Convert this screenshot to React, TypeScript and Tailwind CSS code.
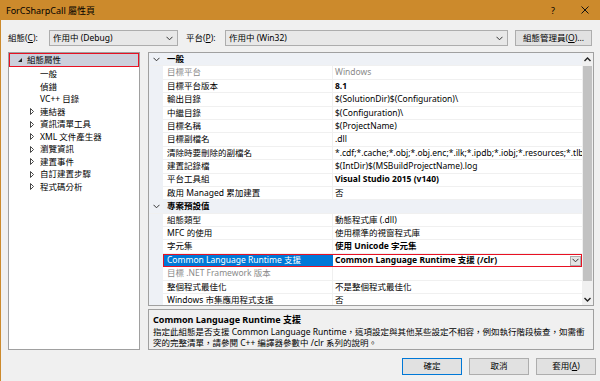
import React from "react";

type Row =
  | { cat: string }
  | { name: string; value?: string; bold?: boolean; gray?: boolean; grayName?: boolean; selected?: boolean };

const rows: Row[] = [
  { cat: "一般" },
  { name: "目標平台", value: "Windows", gray: true, grayName: true },
  { name: "目標平台版本", value: "8.1", bold: true },
  { name: "輸出目錄", value: "$(SolutionDir)$(Configuration)\\" },
  { name: "中繼目錄", value: "$(Configuration)\\" },
  { name: "目標名稱", value: "$(ProjectName)" },
  { name: "目標副檔名", value: ".dll" },
  {
    name: "清除時要刪除的副檔名",
    value:
      "*.cdf;*.cache;*.obj;*.obj.enc;*.ilk;*.ipdb;*.iobj;*.resources;*.tlb;*.tli;*.tlh;*.tmp;*.rsp;*.pgc;*.pgd;*.meta;*.tlog",
  },
  { name: "建置記錄檔", value: "$(IntDir)$(MSBuildProjectName).log" },
  { name: "平台工具組", value: "Visual Studio 2015 (v140)", bold: true },
  { name: "啟用 Managed 累加建置", value: "否" },
  { cat: "專案預設值" },
  { name: "組態類型", value: "動態程式庫 (.dll)" },
  { name: "MFC 的使用", value: "使用標準的視窗程式庫" },
  { name: "字元集", value: "使用 Unicode 字元集", bold: true },
  { name: "Common Language Runtime 支援", value: "Common Language Runtime 支援 (/clr)", bold: true, selected: true },
  { name: "目標 .NET Framework 版本", value: "", grayName: true },
  { name: "整個程式最佳化", value: "不是整個程式最佳化" },
  { name: "Windows 市集應用程式支援", value: "否" },
];

const treeItems = [
  { label: "一般", expand: false },
  { label: "偵錯", expand: false },
  { label: "VC++ 目錄", expand: false },
  { label: "連結器", expand: true },
  { label: "資訊清單工具", expand: true },
  { label: "XML 文件產生器", expand: true },
  { label: "瀏覽資訊", expand: true },
  { label: "建置事件", expand: true },
  { label: "自訂建置步驟", expand: true },
  { label: "程式碼分析", expand: true },
];

const Chevron = ({ className = "" }: { className?: string }) => (
  <svg width="7" height="5" viewBox="0 0 7 5" className={className}>
    <polyline points="0.5,0.8 3.5,3.8 6.5,0.8" fill="none" stroke="#333" strokeWidth="1" />
  </svg>
);

const Combo = ({ text, w }: { text: string; w: string }) => (
  <div className={`${w} h-[16px] border border-[#adadad] bg-[#e8e8e8] flex items-center justify-between pl-[3px] pr-[4px]`}>
    <span>{text}</span>
    <Chevron />
  </div>
);

const Btn = ({ children, primary }: { children: React.ReactNode; primary?: boolean }) => (
  <div
    className={`w-[60px] h-[17px] flex items-center justify-center bg-[#e1e1e1] border ${
      primary ? "border-[#0078d7]" : "border-[#adadad]"
    }`}
  >
    {children}
  </div>
);

export default function App() {
  return (
    <div className="w-[600px] h-[381px] overflow-hidden bg-[#f0f0f0] border-l border-[#cc8a2c] flex flex-col text-[8.5px] leading-none text-black font-['Noto_Sans','Noto_Sans_CJK_TC',sans-serif]">
      {/* Title bar */}
      <div className="h-[20px] bg-[#cc8a2c] flex items-center pl-[5px] shrink-0">
        <span className="text-[9px]">ForCSharpCall 屬性頁</span>
        <span className="ml-auto text-[9px]">?</span>
        <svg width="8" height="8" viewBox="0 0 8 8" className="ml-[26px] mr-[11px]">
          <path d="M0.5 0.5 L7.5 7.5 M7.5 0.5 L0.5 7.5" stroke="#111" strokeWidth="1" />
        </svg>
      </div>

      {/* Configuration row */}
      <div className="flex items-center pl-[7px] pt-[10px] shrink-0">
        <span className="w-[41px]">
          組態(<span className="underline">C</span>):
        </span>
        <Combo text="作用中 (Debug)" w="w-[129px]" />
        <span className="w-[39px] ml-[8px]">
          平台(<span className="underline">P</span>):
        </span>
        <Combo text="作用中 (Win32)" w="w-[283px]" />
        <div className="ml-[7px] w-[77px] h-[16px] border border-[#adadad] bg-[#e1e1e1] flex items-center justify-center">
          組態管理員(<span className="underline">O</span>)...
        </div>
      </div>

      {/* Main */}
      <div className="flex pl-[7px] mt-[6px] gap-[8px] shrink-0">
        {/* Tree */}
        <div className="w-[132px] h-[298px] border border-[#a0a0a0] bg-white">
          <div className="h-[14px] border border-[#e81123] bg-[#ccd0dc] flex items-center pl-[8px]">
            <svg width="4" height="4" viewBox="0 0 4 4">
              <polygon points="4,0 4,4 0,4" fill="#222" />
            </svg>
            <span className="ml-[5px]">組態屬性</span>
          </div>
          <div className="mt-[1px]">
            {treeItems.map((t) => (
              <div key={t.label} className="h-[12.5px] flex items-center pl-[21px]">
                <div className="w-[10px]">
                  {t.expand && (
                    <svg width="4" height="7" viewBox="0 0 4 7">
                      <polygon points="0.5,0.5 3.5,3.5 0.5,6.5" fill="none" stroke="#333" strokeWidth="0.9" />
                    </svg>
                  )}
                </div>
                <span>{t.label}</span>
              </div>
            ))}
          </div>
        </div>

        {/* Right column */}
        <div className="w-[446px] flex flex-col gap-[3px]">
          {/* Property grid */}
          <div className="h-[254px] border border-[#a0a0a0] bg-white flex overflow-hidden">
            <div className="flex-1 min-w-0 flex flex-col overflow-hidden">
              {rows.map((r, i) =>
                "cat" in r ? (
                  <div key={i} className="h-[13.4px] shrink-0 flex items-center bg-[#eef1f6] border-b border-[#f0f0f0]">
                    <div className="w-[14px] shrink-0 flex justify-center">
                      <Chevron />
                    </div>
                    <span className="pl-[4px] font-bold">{r.cat}</span>
                  </div>
                ) : (
                  <div key={i} className="h-[13.4px] shrink-0 flex">
                    <div className="w-[14px] shrink-0 bg-[#eef1f6]" />
                    {r.selected ? (
                      <div className="flex-1 min-w-0 flex border border-[#e81123] bg-white">
                        <div className="w-[169px] shrink-0 bg-[#0078d7] text-white flex items-center pl-[3px] whitespace-nowrap">
                          {r.name}
                        </div>
                        <div className="flex-1 min-w-0 flex items-center pl-[2px] font-bold whitespace-nowrap">
                          <span>{r.value}</span>
                          <div className="ml-auto w-[11px] h-[10px] border border-[#adadad] bg-[#e5e5e5] flex items-center justify-center">
                            <Chevron />
                          </div>
                        </div>
                      </div>
                    ) : (
                      <div className="flex-1 min-w-0 flex border-b border-[#f0f0f0]">
                        <div
                          className={`w-[170px] shrink-0 border-r border-[#f0f0f0] flex items-center pl-[4px] whitespace-nowrap ${
                            r.grayName ? "text-[#8a8a8a]" : ""
                          }`}
                        >
                          {r.name}
                        </div>
                        <div
                          className={`flex-1 min-w-0 overflow-hidden flex items-center pl-[2px] whitespace-nowrap ${
                            r.bold ? "font-bold" : ""
                          } ${r.gray ? "text-[#8a8a8a]" : ""}`}
                        >
                          {r.value}
                        </div>
                      </div>
                    )}
                  </div>
                )
              )}
            </div>
            {/* Scrollbar */}
            <div className="w-[11px] shrink-0 bg-[#f0f0f0] flex flex-col">
              <div className="h-[13px] flex items-center justify-center">
                <svg width="7" height="5" viewBox="0 0 7 5">
                  <polyline points="0.5,4 3.5,1 6.5,4" fill="none" stroke="#222" strokeWidth="1.4" />
                </svg>
              </div>
              <div className="h-[215px] mx-[1px] bg-[#c2c2c2]" />
              <div className="flex-1" />
              <div className="h-[12px] flex items-center justify-center">
                <svg width="7" height="5" viewBox="0 0 7 5">
                  <polyline points="0.5,1 3.5,4 6.5,1" fill="none" stroke="#222" strokeWidth="1.4" />
                </svg>
              </div>
            </div>
          </div>

          {/* Description */}
          <div className="h-[41px] border border-[#a0a0a0] bg-[#f0f0f0] pl-[4px] pt-[4px]">
            <div className="font-bold text-[9px] leading-[11px]">Common Language Runtime 支援</div>
            <div className="mt-[2px] leading-[10.5px]">
              指定此組態是否支援 Common Language Runtime，這項設定與其他某些設定不相容，例如執行階段檢查，如需衝
              <br />
              突的完整清單，請參閱 C++ 編譯器參數中 /clr 系列的說明。
            </div>
          </div>
        </div>
      </div>

      {/* Buttons */}
      <div className="flex justify-end gap-[7px] pr-[4px] mt-[8px]">
        <Btn primary>確定</Btn>
        <Btn>取消</Btn>
        <Btn>
          套用(<span className="underline">A</span>)
        </Btn>
      </div>
    </div>
  );
}
